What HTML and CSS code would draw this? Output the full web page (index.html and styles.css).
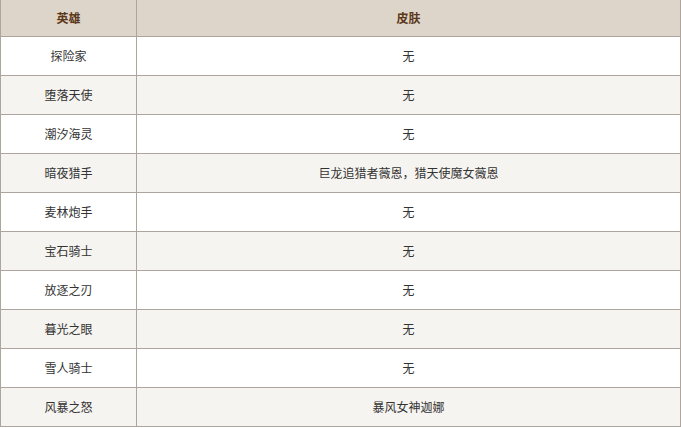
FILE: index.html
```html
<!DOCTYPE html>
<html lang="zh-CN">
<head>
<meta charset="utf-8">
<title>英雄皮肤</title>
<link rel="stylesheet" href="styles.css">
</head>
<body>
<table class="skins">
  <thead>
    <tr><th class="c1">英雄</th><th class="c2">皮肤</th></tr>
  </thead>
  <tbody>
    <tr><td class="c1">探险家</td><td class="c2">无</td></tr>
    <tr><td class="c1">堕落天使</td><td class="c2">无</td></tr>
    <tr><td class="c1">潮汐海灵</td><td class="c2">无</td></tr>
    <tr><td class="c1">暗夜猎手</td><td class="c2">巨龙追猎者薇恩，猎天使魔女薇恩</td></tr>
    <tr><td class="c1">麦林炮手</td><td class="c2">无</td></tr>
    <tr><td class="c1">宝石骑士</td><td class="c2">无</td></tr>
    <tr><td class="c1">放逐之刃</td><td class="c2">无</td></tr>
    <tr><td class="c1">暮光之眼</td><td class="c2">无</td></tr>
    <tr><td class="c1">雪人骑士</td><td class="c2">无</td></tr>
    <tr><td class="c1">风暴之怒</td><td class="c2">暴风女神迦娜</td></tr>
  </tbody>
</table>
</body>
</html>
```
FILE: styles.css
```css
html, body {
  margin: 0;
  padding: 0;
  background: #ffffff;
}
body {
  font-family: "Noto Sans CJK SC", "Noto Sans", sans-serif;
  font-size: 12px;
  color: #333333;
  overflow: hidden;
}
.skins {
  border-collapse: separate;
  border-spacing: 0;
  border-left: 1px solid #aea69e;
  table-layout: fixed;
}
.skins th,
.skins td {
  padding: 0;
  text-align: center;
  vertical-align: middle;
  border-right: 1px solid #aea69e;
  border-bottom: 1px solid #aea69e;
  line-height: 16px;
}
.skins th {
  height: 36px;
  background: #ddd4ca;
  color: #5a3818;
  font-weight: bold;
}
.skins td {
  height: 38px;
}
.skins tbody tr:nth-child(odd) td {
  background: #ffffff;
}
.skins tbody tr:nth-child(even) td {
  background: #f6f4f1;
}
.c1 { width: 135px; }
.c2 { width: 544px; }
```
